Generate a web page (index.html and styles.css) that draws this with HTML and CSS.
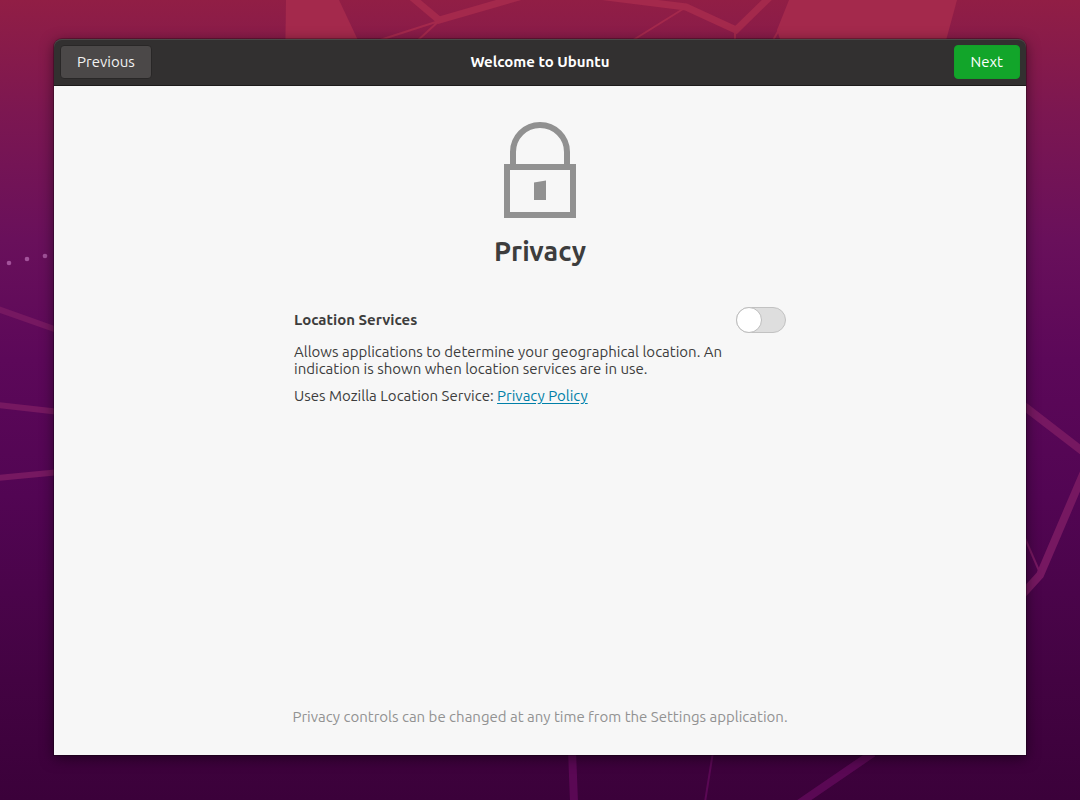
FILE: index.html
```html
<!DOCTYPE html>
<html lang="en">
<head>
  <meta charset="UTF-8" />
  <meta name="viewport" content="width=device-width, initial-scale=1.0"/>
  <title>Welcome to Ubuntu</title>
  <link rel="stylesheet" href="styles.css">
</head>
<body>
  <svg class="wallpaper" viewBox="0 0 1080 800" preserveAspectRatio="none" aria-hidden="true">
    <!-- ears -->
    <g fill="#a4294c">
      <path d="M286 0H339L372 70H285Z"/>
      <path d="M789 0H957L938 70H790L777 30Z"/>
    </g>
    <!-- top lines -->
    <g fill="none" stroke="#a4294c">
      <path stroke-width="7" d="M408 -6L439 20L540 -9"/>
      <path stroke-width="2" d="M439 21L380 40M439 21L416 42M683 9L630 42M735 30V42M780 28L772 42"/>
      <path stroke-width="7" d="M590 -5L686 7L736 30L774 -7"/>
    </g>
    <!-- side lines -->
    <g fill="none" stroke="#761861">
      <path stroke-width="6" d="M-2 309L60 331M-2 405L60 412M-2 478L60 472"/>
      <path stroke-width="8" d="M1020 403L1090 457M1090 458L1040 575L1020 597"/>
      <path stroke-width="2" d="M1024 536L1040 573"/>
    </g>
    <!-- bottom lines -->
    <g fill="none" stroke="#5a0854">
      <path stroke-width="8" d="M572 750L574 802M873 753L797 805"/>
      <path stroke-width="2" d="M713 752L705 802"/>
    </g>
    <g fill="#a3539b">
      <circle cx="9" cy="263" r="2.3"/>
      <circle cx="27" cy="259" r="2.3"/>
      <circle cx="45" cy="256" r="2.3"/>
    </g>
  </svg>

  <div class="window">
    <header class="titlebar">
      <button type="button" class="btn">Previous</button>
      <h1 class="title">Welcome to Ubuntu</h1>
      <button type="button" class="btn btn-next">Next</button>
    </header>

    <main class="content">
      <svg class="lock" viewBox="0 0 72 96" aria-hidden="true">
        <path d="M9 43V30a27 27 0 0 1 54 0V43" fill="none" stroke="#919191" stroke-width="6"/>
        <rect x="3" y="45" width="66" height="48" fill="none" stroke="#919191" stroke-width="6"/>
        <path d="M30 60.500L42 58.500V78H30Z" fill="#919191"/>
      </svg>
      <h2 class="page-title">Privacy</h2>

      <section class="setting">
        <div class="setting-head">
          <label class="setting-name" for="location">Location Services</label>
          <input type="checkbox" role="switch" class="switch" id="location">
        </div>
        <p class="description">Allows applications to determine your geographical location. An indication is shown when location services are in use.</p>
        <p class="description">Uses Mozilla Location Service: <a href="#">Privacy Policy</a></p>
      </section>

      <p class="footnote">Privacy controls can be changed at any time from the Settings application.</p>
    </main>
  </div>
</body>
</html>
```

FILE: styles.css
```css
*,
*::before {
  box-sizing: border-box;
}

body {
  margin: 0;
  min-height: 100vh;
  padding: 39px 5% 45px;
  display: flex;
  font-family: "Ubuntu", "Noto Sans", sans-serif;
  font-size: 15px;
  line-height: 17px;
  color: #3d3d3d;
  background: linear-gradient(#911e45 0%, #7c1751 14%, #69105b 30%, #5c0859 45%, #520553 62%, #430342 85%, #3b013a 100%);
}

h1, h2, p {
  margin: 0;
}

.wallpaper {
  position: absolute;
  top: 0;
  left: 0;
  width: 100%;
  height: 100%;
}

.window {
  position: relative;
  flex: 1;
  display: flex;
  flex-direction: column;
  border-radius: 8px 8px 0 0;
  box-shadow: 0 3px 14px rgba(0, 0, 0, 0.5), 0 0 0 1px rgba(0, 0, 0, 0.25);
}

.titlebar {
  display: grid;
  grid-template-columns: 1fr auto 1fr;
  align-items: center;
  height: 47px;
  padding: 0 6px;
  background: #323030;
  box-shadow: inset 0 1px #4b4848;
  border-bottom: 1px solid #1d1b1b;
  border-radius: 8px 8px 0 0;
}

.title {
  padding-bottom: 2px;
  font-size: 15px;
  font-weight: bold;
  color: #fff;
}

.btn {
  justify-self: start;
  height: 34px;
  padding: 0 16px 2px;
  border: 1px solid #292727;
  border-radius: 4px;
  background: #4b4848;
  color: #f2f2f2;
  font: inherit;
  cursor: pointer;
}

.btn-next {
  justify-self: end;
  border-color: #12a128;
  background: #12a52a;
  color: #fff;
}

.content {
  flex: 1;
  display: flex;
  flex-direction: column;
  align-items: center;
  padding: 36px 24px 30px;
  background: #f7f7f7;
}

.lock {
  width: 72px;
  height: 96px;
}

.page-title {
  margin-top: 15px;
  font-size: 27px;
  line-height: 36px;
}

.setting {
  width: 100%;
  max-width: 492px;
  margin-top: 38px;
}

.setting-head {
  display: flex;
  justify-content: space-between;
  align-items: center;
}

.setting-name {
  padding-bottom: 2px;
  font-weight: bold;
}

.switch {
  appearance: none;
  width: 50px;
  height: 26px;
  margin: 0;
  border: 1px solid #c2c2c2;
  border-radius: 13px;
  background: #dedede;
  cursor: pointer;
}

.switch::before {
  content: "";
  display: block;
  width: 26px;
  height: 26px;
  margin: -1px;
  border: 1px solid #bdbdbd;
  border-radius: 50%;
  background: #fff;
}

.switch:checked {
  background: #12a52a;
}

.switch:checked::before {
  margin-left: 23px;
}

.description {
  max-width: 442px;
  margin-top: 10px;
}

.description a {
  color: #007fa8;
  text-underline-offset: 2px;
}

.footnote {
  margin-top: auto;
  color: #929292;
}
```
